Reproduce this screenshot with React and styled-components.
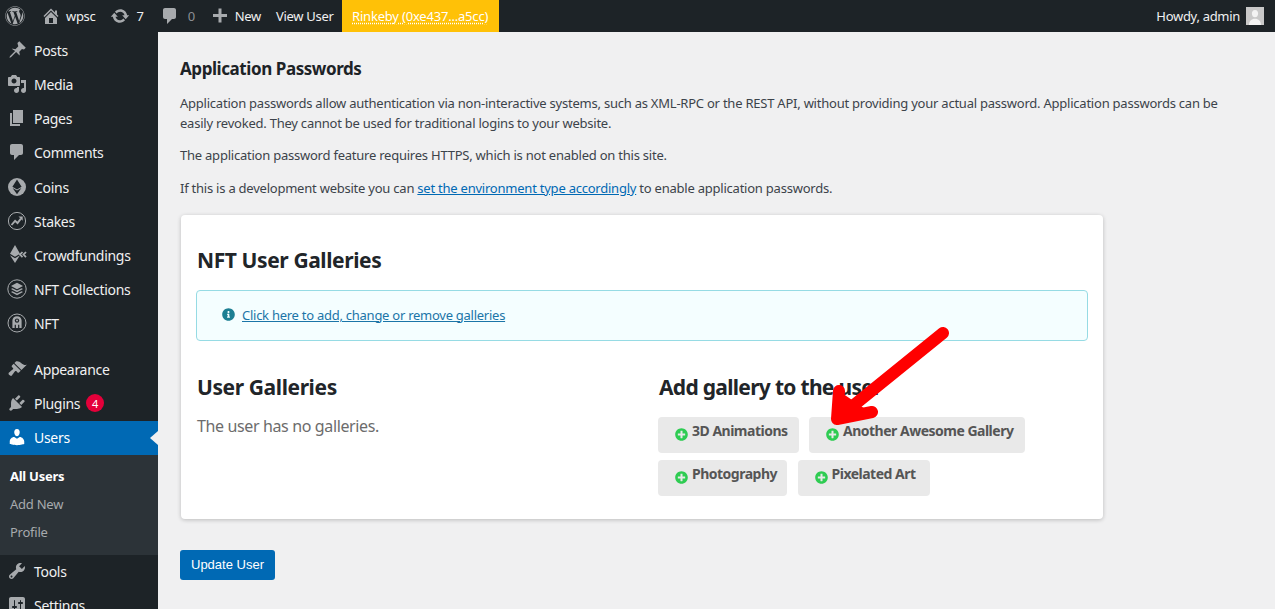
import React from "react";
import styled, { createGlobalStyle } from "styled-components";
import { FaWordpress, FaPlusCircle, FaInfoCircle } from "react-icons/fa";

const GlobalStyle = createGlobalStyle`
  html, body {
    margin: 0;
    height: 100%;
    overflow: hidden;
    background: #f0f0f1;
  }
  body {
    font-family: "Noto Sans", "Open Sans", sans-serif;
    font-size: 13px;
    color: #3c434a;
  }
  * { box-sizing: border-box; }
`;

const Page = styled.div`
  position: relative;
  width: 1275px;
  height: 609px;
  overflow: hidden;
`;

/* top bar */
const TopBar = styled.div`
  height: 32px;
  background: #1d2327;
  display: flex;
  align-items: center;
  color: #f0f0f1;
  letter-spacing: -0.3px;
`;

const BarItem = styled.div`
  height: 32px;
  display: flex;
  align-items: center;
  gap: ${(p) => p.$gap || 0}px;
  margin-left: ${(p) => p.$left || 0}px;
  color: ${(p) => (p.$dim ? "#8c8f94" : "#f0f0f1")};
  svg { fill: #a7aaad; flex: none; }
`;

const Network = styled.a`
  height: 32px;
  margin-left: 8px;
  width: 157px;
  background: #ffc107;
  color: #fff;
  display: flex;
  align-items: center;
  justify-content: center;
  letter-spacing: -0.2px;
  text-decoration: underline dotted;
  text-underline-offset: 2px;
  white-space: nowrap;
`;

const Howdy = styled.div`
  margin-left: auto;
  display: flex;
  align-items: center;
  gap: 6px;
  padding-right: 11px;
`;

const Avatar = styled.svg`
  width: 18px;
  height: 18px;
  display: block;
`;

/* page body */
const Body = styled.div`
  display: flex;
  height: 577px;
`;

const Sidebar = styled.nav`
  width: 158px;
  flex: none;
  background: #1d2327;
  padding-top: 2px;
  overflow: hidden;
`;

const MenuItem = styled.div`
  position: relative;
  height: 34px;
  padding-bottom: 2px;
  display: flex;
  align-items: center;
  margin-top: ${(p) => p.$top || 0}px;
  color: ${(p) => (p.$active ? "#fff" : "#f0f0f1")};
  background: ${(p) => (p.$active ? "#0069b4" : "transparent")};
  font-size: 14px;
  letter-spacing: -0.3px;
  svg { fill: ${(p) => (p.$active ? "#fff" : "#a7aaad")}; }
  ${(p) =>
    p.$active &&
    `&::after {
      content: "";
      position: absolute;
      right: 0;
      top: 10px;
      border: 7px solid transparent;
      border-left: 0;
      border-right: 8px solid #f0f0f1;
    }`}
`;

const MenuIcon = styled.span`
  width: 34px;
  flex: none;
  display: flex;
  justify-content: center;
  padding-right: 1px;
  svg { width: 20px; height: 20px; display: block; }
`;

const Badge = styled.span`
  width: 18px;
  height: 18px;
  margin-left: 6px;
  border-radius: 50%;
  background: #e4003a;
  color: #fff;
  font-size: 11px;
  letter-spacing: 0;
  display: flex;
  align-items: center;
  justify-content: center;
`;

const SubMenu = styled.div`
  height: 100px;
  background: #2c3338;
  padding-top: 7px;
`;

const SubItem = styled.div`
  height: 28px;
  padding-left: 10px;
  display: flex;
  align-items: center;
  color: ${(p) => (p.$current ? "#fff" : "#a7aaad")};
  font-weight: ${(p) => (p.$current ? 700 : 400)};
  letter-spacing: -0.25px;
`;

const Main = styled.main`
  flex: 1;
  padding: 27px 0 0 22px;
  min-width: 0;
`;

const SectionTitle = styled.h2`
  margin: 0 0 14px;
  font-size: 17px;
  line-height: 20px;
  color: #1d2327;
  font-weight: 700;
  letter-spacing: -0.43px;
`;

const Para = styled.p`
  margin: 0 0 ${(p) => p.$after || 12}px;
  line-height: 20px;
  letter-spacing: -0.23px;
  white-space: nowrap;
`;

const DocLink = styled.a`
  color: #0069b4;
  text-decoration: underline;
`;

const Card = styled.section`
  width: 922px;
  height: 304px;
  margin: 17px 0 0 1px;
  padding: 30px 15px 0;
  background: #fff;
  border-radius: 4px;
  box-shadow: 0 1px 4px rgba(0, 0, 0, 0.22);
`;

const Title = styled.h3`
  margin: 0 0 0 1px;
  font-size: 21px;
  line-height: 30px;
  font-weight: 700;
  color: #212529;
  letter-spacing: ${(p) => (p.$tight ? -0.7 : -0.4)}px;
`;

const Notice = styled.div`
  height: 51px;
  margin-top: 15px;
  padding: 0 0 2px 25px;
  border: 1px solid #96dbe4;
  border-radius: 4px;
  background: #f4feff;
  display: flex;
  align-items: center;
  gap: 7px;
  svg { width: 13px; height: 13px; color: #1c7f93; flex: none; }
`;

const NoticeLink = styled.a`
  color: #1b75a8;
  text-decoration: underline;
  letter-spacing: -0.26px;
`;

const Columns = styled.div`
  display: grid;
  grid-template-columns: 462px 1fr;
  margin-top: 31px;
`;

const EmptyText = styled.p`
  margin: 12px 0 0 1px;
  font-size: 16px;
  line-height: 24px;
  color: #6c6c6c;
  letter-spacing: -0.37px;
`;

const Chips = styled.div`
  display: flex;
  flex-wrap: wrap;
  gap: 7px 10.5px;
  margin-top: 15px;
`;

const Chip = styled.div`
  height: 36px;
  width: ${(p) => p.$width}px;
  padding-left: 17px;
  background: #e9e9e9;
  border-radius: 4px;
  display: flex;
  gap: 4px;
  color: #555;
  font-size: 14px;
  font-weight: 700;
  letter-spacing: -0.5px;
  white-space: nowrap;
  line-height: 28px;
  svg {
    width: 13px;
    height: 13px;
    margin-top: 11px;
    flex: none;
    color: #2ecc52;
  }
`;

const UpdateButton = styled.button`
  display: block;
  width: 95px;
  height: 30px;
  margin-top: 31px;
  padding: 0 0 2px;
  border: 0;
  border-radius: 3px;
  background: #0069b4;
  color: #fff;
  font-family: "Liberation Sans", Arial, sans-serif;
  font-size: 13px;
`;

const ArrowMark = styled.svg`
  position: absolute;
  left: 825px;
  top: 325px;
  width: 130px;
  height: 105px;
  pointer-events: none;
`;

const Dash = ({ d }) => (
  <svg viewBox="0 0 20 20" aria-hidden="true">
    <path d={d} />
  </svg>
);

const paths = {
  home: "M16 8.5l1.53 1.53-1.06 1.06L10 4.62l-6.47 6.47-1.06-1.06L10 2.5l4 4v-2h2v4zm-6-2.46l6 5.99V18H4v-5.97zM12 17v-5H8v5h4z",
  update:
    "M10.2 3.28c3.53 0 6.43 2.61 6.92 6h2.08l-3.5 4-3.5-4h2.32c-.45-1.97-2.21-3.45-4.32-3.45-1.45 0-2.73.71-3.54 1.78L4.95 5.66C6.23 4.2 8.11 3.28 10.2 3.28zm-.4 13.44c-3.52 0-6.43-2.61-6.92-6H.8l3.5-4c1.17 1.33 2.33 2.67 3.5 4H5.48c.45 1.97 2.21 3.45 4.32 3.45 1.45 0 2.73-.71 3.54-1.78l1.71 1.95c-1.28 1.46-3.15 2.38-5.25 2.38z",
  comment:
    "M5 2h9c1.1 0 2 .9 2 2v7c0 1.1-.9 2-2 2h-2l-5 5v-5H5c-1.1 0-2-.9-2-2V4c0-1.1.9-2 2-2z",
  plus: "M17 8v3h-5.5v5.5h-3V11H3V8h5.5V2.5h3V8z",
  post: "M10.44 3.02l1.82-1.82 6.54 6.54-1.82 1.82c-.62-.35-1.3-.53-2.03-.53l-2.85 2.85c.59 1.09.78 2.43.48 3.68l-3.45-3.45-5.2 5.2-1.46.47.47-1.46 5.2-5.2L4.69 8.77c1.25-.3 2.59-.11 3.68.48l2.85-2.85c0-.73-.18-1.41-.53-2.03z",
  media:
    "M13 11V4c0-.55-.45-1-1-1h-1.67L9 1H5L3.67 3H2c-.55 0-1 .45-1 1v7c0 .55.45 1 1 1h10c.55 0 1-.45 1-1zM7 4.5c1.38 0 2.5 1.12 2.5 2.5S8.38 9.5 7 9.5 4.5 8.38 4.5 7 5.62 4.5 7 4.5zM14 6h5v10.5c0 1.38-1.12 2.5-2.5 2.5S14 17.88 14 16.5s1.12-2.5 2.5-2.5c.17 0 .34.02.5.05V9h-3V6zm-4 8.05V13h2v3.5c0 1.38-1.12 2.5-2.5 2.5S7 17.88 7 16.5 8.12 14 9.5 14c.17 0 .34.02.5.05z",
  page: "M6 15V2h10v13H6zm-1 1h8v2H3V5h2v11z",
  appearance:
    "M14.48 11.06L7.41 3.99l1.5-1.5c.5-.56 2.3-.47 3.51.32 1.21.8 1.43 1.28 2.91 2.1 1.18.64 2.45 1.26 4.45.85zm-.71.71L6.7 4.7 4.93 6.47c-.39.39-.39 1.02 0 1.41l1.06 1.06c.39.39.39 1.03 0 1.42-.6.6-1.43 1.11-2.21 1.69-.35.26-.7.53-1.01.84C1.43 13.23 1 14.8 2.3 16.1c1.3 1.3 2.87.87 3.21-.52.31-.31.58-.66.84-1.01.58-.78 1.09-1.61 1.69-2.21.39-.39 1.03-.39 1.42 0l1.06 1.06c.39.39 1.02.39 1.41 0z",
  plugins:
    "M13.11 4.36L9.87 7.6 8 5.73l3.24-3.24c.35-.34 1.05-.2 1.56.32.52.51.66 1.21.31 1.55zm-8 1.77l.91-1.12 9.01 9.01-1.19.84c-.71.71-2.63 1.16-3.82 1.16H6.14L4.9 17.26c-.59.59-1.54.59-2.12 0-.59-.58-.59-1.53 0-2.12l1.24-1.24v-3.88c0-1.13.4-3.19 1.09-3.89zm7.26 3.97l3.24-3.24c.34-.35 1.04-.21 1.55.31.52.51.66 1.21.31 1.55l-3.24 3.25z",
  users:
    "M10 9.25c-2.27 0-2.73-3.44-2.73-3.44C7 4.02 7.82 2 9.97 2c2.16 0 2.98 2.02 2.71 3.81 0 0-.41 3.44-2.68 3.44zm0 2.57L12.72 10c2.39 0 4.52 2.33 4.52 4.53v2.49s-3.65 1.13-7.24 1.13c-3.65 0-7.24-1.13-7.24-1.13v-2.49c0-2.25 1.94-4.48 4.47-4.48z",
  tools:
    "M16.68 9.77c-1.34 1.34-3.3 1.67-4.95.99l-5.41 6.52c-.99.99-2.59.99-3.58 0s-.99-2.59 0-3.57l6.52-5.42c-.68-1.65-.35-3.61.99-4.95 1.28-1.28 3.12-1.62 4.72-1.06l-2.89 2.89 2.82 2.82 2.86-2.87c.53 1.58.18 3.39-1.08 4.65zM3.81 16.21c.4.39 1.04.39 1.43 0 .4-.4.4-1.04 0-1.43-.39-.4-1.03-.4-1.43 0-.39.39-.39 1.03 0 1.43z",
  settings:
    "M18 16V4c0-1.1-.9-2-2-2H4c-1.1 0-2 .9-2 2v12c0 1.1.9 2 2 2h12c1.1 0 2-.9 2-2zM8 11h1c.55 0 1 .45 1 1s-.45 1-1 1H8v1.5c0 .28-.22.5-.5.5s-.5-.22-.5-.5V13H6c-.55 0-1-.45-1-1s.45-1 1-1h1V5.5c0-.28.22-.5.5-.5s.5.22.5.5V11zm5-2h-1c-.55 0-1-.45-1-1s.45-1 1-1h1V5.5c0-.28.22-.5.5-.5s.5.22.5.5V7h1c.55 0 1 .45 1 1s-.45 1-1 1h-1v5.5c0 .28-.22.5-.5.5s-.5-.22-.5-.5V9z",
};

const CoinIcon = () => (
  <svg viewBox="0 0 20 20" aria-hidden="true">
    <circle cx="10" cy="10" r="9" />
    <path d="M10 2.5l4.6 7.3L10 12.5 5.4 9.8zM5.6 11L10 13.6l4.4-2.6L10 17.2z" fill="#1d2327" />
  </svg>
);

const StakesIcon = () => (
  <svg viewBox="0 0 20 20" aria-hidden="true">
    <circle cx="10" cy="10" r="8.6" fill="none" stroke="#a7aaad" strokeWidth="1" />
    <path d="M4.5 14l3.6-4.200 2.400 2.200 3.400-4.400" fill="none" stroke="#a7aaad" strokeWidth="1.9" />
    <path d="M11.500 5.600h4.200v4.200z" />
  </svg>
);

const CrowdIcon = () => (
  <svg viewBox="0 0 20 20" aria-hidden="true">
    <path d="M8 0l5 8.800-5 3-5-3zM3 10.300l5 3 5-3-5 7.700z" />
    <path d="M15.500 7l-2.500 2.600 2.500 2.600M19 7l-2.500 2.600 2.500 2.600" fill="none" stroke="#a7aaad" strokeWidth="1.8" />
  </svg>
);

const LayersIcon = () => (
  <svg viewBox="0 0 20 20" aria-hidden="true">
    <circle cx="10" cy="10" r="9.200" fill="none" stroke="#a7aaad" strokeWidth="1" />
    <path d="M10 3.800l6 3.200-6 3.200L4 7zM5.400 9.200L10 11.600l4.600-2.400L16 10l-6 3.200L4 10zM5.400 12.200l4.600 2.400 4.600-2.400 1.400.8-6 3.200L4 13z" />
  </svg>
);

const NftIcon = () => (
  <svg viewBox="0 0 20 20" aria-hidden="true">
    <circle cx="10" cy="10" r="9" fill="none" stroke="#a7aaad" strokeWidth="1" />
    <path d="M10 3.200c2.900 0 4.600 1.900 4.600 4.400V15h-2.300v-3.200h-1.200V15H8.900v-3.200H7.700V15H5.400V7.600c0-2.500 1.700-4.400 4.600-4.400z" />
    <circle cx="10" cy="7.6" r="2.200" fill="#1d2327" />
    <circle cx="10" cy="7.6" r="1" />
  </svg>
);

const menuTop = [
  ["Posts", <Dash d={paths.post} />],
  ["Media", <Dash d={paths.media} />],
  ["Pages", <Dash d={paths.page} />],
  ["Comments", <Dash d={paths.comment} />],
  ["Coins", <CoinIcon />, 1],
  ["Stakes", <StakesIcon />],
  ["Crowdfundings", <CrowdIcon />],
  ["NFT Collections", <LayersIcon />],
  ["NFT", <NftIcon />],
];

const App = () => (
  <Page>
    <GlobalStyle />
    <TopBar>
      <BarItem $left={5}>
        <FaWordpress size={20} color="#a7aaad" />
      </BarItem>
      <BarItem $left={16} $gap={5}>
        <svg width="20" height="20" viewBox="0 0 20 20"><path d={paths.home} /></svg>
        wpsc
      </BarItem>
      <BarItem $left={15} $gap={6}>
        <svg width="20" height="20" viewBox="0 0 20 20"><path d={paths.update} /></svg>
        7
      </BarItem>
      <BarItem $left={16} $gap={8} $dim>
        <svg width="20" height="20" viewBox="0 0 20 20"><path d={paths.comment} /></svg>
        0
      </BarItem>
      <BarItem $left={15} $gap={5}>
        <svg width="20" height="20" viewBox="0 0 20 20"><path d={paths.plus} /></svg>
        New
      </BarItem>
      <BarItem $left={15}>View User</BarItem>
      <Network>Rinkeby (0xe437...a5cc)</Network>
      <Howdy>
        Howdy, admin
        <Avatar viewBox="0 0 18 18">
          <rect width="18" height="18" fill="#c9c9c9" />
          <path d="M9 3c2.200 0 3.300 1.800 3.100 4-.2 2-1.300 3.300-3.100 3.300S6.100 9 5.900 7C5.700 4.800 6.800 3 9 3zM3 18c0-4 2.500-6.300 6-6.300s6 2.300 6 6.300z" fill="#f3f3f3" />
        </Avatar>
      </Howdy>
    </TopBar>
    <Body>
      <Sidebar>
        {menuTop.map(([label, icon, top]) => (
          <MenuItem key={label} $top={top}>
            <MenuIcon>{icon}</MenuIcon>
            {label}
          </MenuItem>
        ))}
        <MenuItem $top={12}>
          <MenuIcon><Dash d={paths.appearance} /></MenuIcon>
          Appearance
        </MenuItem>
        <MenuItem>
          <MenuIcon><Dash d={paths.plugins} /></MenuIcon>
          Plugins
          <Badge>4</Badge>
        </MenuItem>
        <MenuItem $active>
          <MenuIcon><Dash d={paths.users} /></MenuIcon>
          Users
        </MenuItem>
        <SubMenu>
          <SubItem $current>All Users</SubItem>
          <SubItem>Add New</SubItem>
          <SubItem>Profile</SubItem>
        </SubMenu>
        <MenuItem>
          <MenuIcon><Dash d={paths.tools} /></MenuIcon>
          Tools
        </MenuItem>
        <MenuItem>
          <MenuIcon><Dash d={paths.settings} /></MenuIcon>
          Settings
        </MenuItem>
      </Sidebar>
      <Main>
        <SectionTitle>Application Passwords</SectionTitle>
        <Para>
          Application passwords allow authentication via non-interactive systems, such as XML-RPC or the REST API, without providing your actual password. Application passwords can be
          <br />
          easily revoked. They cannot be used for traditional logins to your website.
        </Para>
        <Para $after={13}>The application password feature requires HTTPS, which is not enabled on this site.</Para>
        <Para>
          If this is a development website you can <DocLink>set the environment type accordingly</DocLink> to enable application passwords.
        </Para>
        <Card>
          <Title>NFT User Galleries</Title>
          <Notice>
            <FaInfoCircle />
            <NoticeLink>Click here to add, change or remove galleries</NoticeLink>
          </Notice>
          <Columns>
            <div>
              <Title>User Galleries</Title>
              <EmptyText>The user has no galleries.</EmptyText>
            </div>
            <div>
              <Title $tight>Add gallery to the user</Title>
              <Chips>
                <Chip $width={140.5}><FaPlusCircle />3D Animations</Chip>
                <Chip $width={215.5}><FaPlusCircle />Another Awesome Gallery</Chip>
                <Chip $width={129}><FaPlusCircle />Photography</Chip>
                <Chip $width={132}><FaPlusCircle />Pixelated Art</Chip>
              </Chips>
            </div>
          </Columns>
        </Card>
        <UpdateButton>Update User</UpdateButton>
      </Main>
    </Body>
    <ArrowMark viewBox="0 0 130 105">
      <path d="M14 66L12 92L46 88z" fill="#ff0000" />
      <path
        d="M118 8L13 93M14 66L12 94L47 87"
        fill="none"
        stroke="#ff0000"
        strokeWidth="12"
        strokeLinecap="round"
        strokeLinejoin="round"
      />
    </ArrowMark>
  </Page>
);

export default App;
